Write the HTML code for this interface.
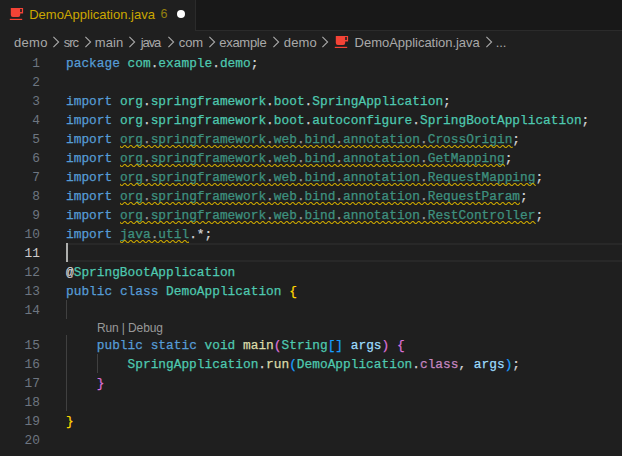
<!DOCTYPE html>
<html><head><meta charset="utf-8"><title>DemoApplication.java</title>
<style>
*{box-sizing:border-box;margin:0;padding:0}
html,body{width:622px;height:456px;overflow:hidden;background:#1f1f1f}
body{position:relative;font-family:"Liberation Sans",sans-serif;color:#ccc}
#tabs{position:absolute;left:0;top:0;width:622px;height:31px;background:#181818;border-bottom:1px solid #2b2b2b}
#tab{position:absolute;left:0;top:0;width:196px;height:31px;background:#1f1f1f;border-right:1px solid #2b2b2b}
#tab .lbl{position:absolute;left:29.2px;top:6px;font-size:13px;line-height:17px;color:#cca700;white-space:nowrap}
#tab .cnt{position:absolute;left:160.6px;top:6px;font-size:12.5px;line-height:17px;color:#94800f;white-space:nowrap}
#tab .dot{position:absolute;left:176.6px;top:9.7px;width:8.8px;height:8.8px;border-radius:50%;background:#fff}
.jicon{position:absolute}
#bc{position:absolute;left:0;top:31px;width:622px;height:22px;background:#1f1f1f;font-size:13px;line-height:22px;color:#a9a9a9;white-space:nowrap}
#bc span{position:absolute;top:1px}
.ch{position:absolute;top:5px}
#ed{position:absolute;left:0;top:54px;width:622px;height:402px;font-family:"Liberation Mono",monospace;font-size:13.7px;letter-spacing:0;line-height:19px;white-space:pre;color:#d4d4d4;-webkit-text-stroke:0.25px}
.ln{-webkit-text-stroke:0;position:absolute;left:0;width:40px;text-align:right;transform:scaleX(.93674);transform-origin:right center;color:#6e7681;height:19px}
.ln.a{color:#ccc}
.cl{position:absolute;left:66px;height:19px;transform:scaleX(.93674);transform-origin:left center}
.k{color:#569cd6}.t{color:#4ec9b0}.c{color:#c586c0}.f{color:#dcdcaa}.v{color:#9cdcfe}
.b1{color:#ffd700}.b2{color:#da70d6}.b3{color:#179fff}
.u{opacity:.667}
#hl{position:absolute;left:66px;top:189px;width:556px;height:19px;border-top:2px solid #282828;border-bottom:2px solid #282828}
#cur{position:absolute;left:66px;top:189px;width:2px;height:19px;background:#aeafad}
.sq{position:absolute}
.g{position:absolute;width:1px;background:#404040}
#lens{-webkit-text-stroke:0;position:absolute;left:97px;top:266px;font-family:"Liberation Sans",sans-serif;font-size:12px;letter-spacing:-0.12px;line-height:16px;color:#999}
</style></head><body>
<div id="tabs"><div id="tab">
<svg class="jicon" style="left:9px;top:7px" width="16" height="16" viewBox="0 0 16 16"><path d="M1.8 0.9H14.1V6.6H11.2V7.9Q11.2 9.9 9.2 9.9H3.8Q1.8 9.9 1.8 7.9Z M11.2 2H12.8V5H11.2Z" fill="#f44336" fill-rule="evenodd"/><rect x="0.8" y="11.8" width="12.4" height="1.2" fill="#f44336"/></svg>
<span class="lbl">DemoApplication.java</span><span class="cnt">6</span><span class="dot"></span>
</div></div>
<div id="bc">
<span style="left:13.9px;letter-spacing:0.33px">demo</span>
<span style="left:63.7px;letter-spacing:-1.00px">src</span>
<span style="left:94.8px;letter-spacing:0.07px">main</span>
<span style="left:140.8px;letter-spacing:-1.10px">java</span>
<span style="left:178.8px;letter-spacing:-0.15px">com</span>
<span style="left:219.3px;letter-spacing:-0.30px">example</span>
<span style="left:283.8px;letter-spacing:0.13px">demo</span>
<span style="left:354.6px;letter-spacing:-0.03px">DemoApplication.java</span>
<span style="left:495.8px;letter-spacing:-0.15px">...</span>
<svg class="ch" style="left:52.3px" width="8" height="12" viewBox="0 0 8 12"><path d="M1.4 0.8 L6.6 6 L1.4 11.2" fill="none" stroke="#a9a9a9" stroke-width="1.1"/></svg>
<svg class="ch" style="left:84.2px" width="8" height="12" viewBox="0 0 8 12"><path d="M1.4 0.8 L6.6 6 L1.4 11.2" fill="none" stroke="#a9a9a9" stroke-width="1.1"/></svg>
<svg class="ch" style="left:128.3px" width="8" height="12" viewBox="0 0 8 12"><path d="M1.4 0.8 L6.6 6 L1.4 11.2" fill="none" stroke="#a9a9a9" stroke-width="1.1"/></svg>
<svg class="ch" style="left:166.8px" width="8" height="12" viewBox="0 0 8 12"><path d="M1.4 0.8 L6.6 6 L1.4 11.2" fill="none" stroke="#a9a9a9" stroke-width="1.1"/></svg>
<svg class="ch" style="left:207.9px" width="8" height="12" viewBox="0 0 8 12"><path d="M1.4 0.8 L6.6 6 L1.4 11.2" fill="none" stroke="#a9a9a9" stroke-width="1.1"/></svg>
<svg class="ch" style="left:272.1px" width="8" height="12" viewBox="0 0 8 12"><path d="M1.4 0.8 L6.6 6 L1.4 11.2" fill="none" stroke="#a9a9a9" stroke-width="1.1"/></svg>
<svg class="ch" style="left:321.2px" width="8" height="12" viewBox="0 0 8 12"><path d="M1.4 0.8 L6.6 6 L1.4 11.2" fill="none" stroke="#a9a9a9" stroke-width="1.1"/></svg>
<svg class="ch" style="left:484.6px" width="8" height="12" viewBox="0 0 8 12"><path d="M1.4 0.8 L6.6 6 L1.4 11.2" fill="none" stroke="#a9a9a9" stroke-width="1.1"/></svg>
<svg class="jicon" style="left:334px;top:4px" width="16" height="16" viewBox="0 0 16 16"><path d="M1.8 0.9H14.1V6.6H11.2V7.9Q11.2 9.9 9.2 9.9H3.8Q1.8 9.9 1.8 7.9Z M11.2 2H12.8V5H11.2Z" fill="#f44336" fill-rule="evenodd"/><rect x="0.8" y="11.8" width="12.4" height="1.2" fill="#f44336"/></svg>
</div>
<svg width="0" height="0" style="position:absolute"><defs><pattern id="sqp" x="0" y="0" width="6" height="3" patternUnits="userSpaceOnUse"><g fill="#cca700"><polygon points="5.5,0 2.5,3 1.1,3 4.1,0"/><polygon points="4,0 6,2 6,0.6 5.4,0"/><polygon points="0,2 1,3 2.4,3 0,0.6"/></g></pattern></defs></svg>
<div id="ed">
<div id="hl"></div><div id="cur"></div>
<div class="ln" style="top:0px">1</div>
<div class="cl" style="top:0px"><span class="k">package</span> <span class="t">com</span>.<span class="t">example</span>.<span class="t">demo</span>;</div>
<div class="ln" style="top:19px">2</div>
<div class="ln" style="top:38px">3</div>
<div class="cl" style="top:38px"><span class="k">import</span> <span class="t">org</span>.<span class="t">springframework</span>.<span class="t">boot</span>.<span class="t">SpringApplication</span>;</div>
<div class="ln" style="top:57px">4</div>
<div class="cl" style="top:57px"><span class="k">import</span> <span class="t">org</span>.<span class="t">springframework</span>.<span class="t">boot</span>.<span class="t">autoconfigure</span>.<span class="t">SpringBootApplication</span>;</div>
<div class="ln" style="top:76px">5</div>
<div class="cl" style="top:76px"><span class="k">import</span> <span class="u"><span class="t">org</span>.<span class="t">springframework</span>.<span class="t">web</span>.<span class="t">bind</span>.<span class="t">annotation</span>.<span class="t">CrossOrigin</span></span>;</div>
<div class="ln" style="top:95px">6</div>
<div class="cl" style="top:95px"><span class="k">import</span> <span class="u"><span class="t">org</span>.<span class="t">springframework</span>.<span class="t">web</span>.<span class="t">bind</span>.<span class="t">annotation</span>.<span class="t">GetMapping</span></span>;</div>
<div class="ln" style="top:114px">7</div>
<div class="cl" style="top:114px"><span class="k">import</span> <span class="u"><span class="t">org</span>.<span class="t">springframework</span>.<span class="t">web</span>.<span class="t">bind</span>.<span class="t">annotation</span>.<span class="t">RequestMapping</span></span>;</div>
<div class="ln" style="top:133px">8</div>
<div class="cl" style="top:133px"><span class="k">import</span> <span class="u"><span class="t">org</span>.<span class="t">springframework</span>.<span class="t">web</span>.<span class="t">bind</span>.<span class="t">annotation</span>.<span class="t">RequestParam</span></span>;</div>
<div class="ln" style="top:152px">9</div>
<div class="cl" style="top:152px"><span class="k">import</span> <span class="u"><span class="t">org</span>.<span class="t">springframework</span>.<span class="t">web</span>.<span class="t">bind</span>.<span class="t">annotation</span>.<span class="t">RestController</span></span>;</div>
<div class="ln" style="top:171px">10</div>
<div class="cl" style="top:171px"><span class="k">import</span> <span class="u"><span class="t">java</span>.<span class="t">util</span></span>.*;</div>
<div class="ln a" style="top:190px">11</div>
<div class="ln" style="top:209px">12</div>
<div class="cl" style="top:209px">@<span class="t">SpringBootApplication</span></div>
<div class="ln" style="top:228px">13</div>
<div class="cl" style="top:228px"><span class="k">public</span> <span class="k">class</span> <span class="t">DemoApplication</span> <span class="b1">{</span></div>
<div class="ln" style="top:247px">14</div>
<div class="ln" style="top:282px">15</div>
<div class="cl" style="top:282px">    <span class="k">public</span> <span class="k">static</span> <span class="t">void</span> <span class="f">main</span><span class="b2">(</span><span class="t">String</span><span class="b3">[]</span> <span class="v">args</span><span class="b2">)</span> <span class="b2">{</span></div>
<div class="ln" style="top:301px">16</div>
<div class="cl" style="top:301px">        <span class="t">SpringApplication</span>.<span class="f">run</span><span class="b3">(</span><span class="t">DemoApplication</span>.<span class="c">class</span>, <span class="v">args</span><span class="b3">)</span>;</div>
<div class="ln" style="top:320px">17</div>
<div class="cl" style="top:320px">    <span class="b2">}</span></div>
<div class="ln" style="top:339px">18</div>
<div class="ln" style="top:358px">19</div>
<div class="cl" style="top:358px"><span class="b1">}</span></div>
<div class="ln" style="top:377px">20</div>
<div class="g" style="left:66px;top:246px;height:19px"></div>
<div class="g" style="left:66px;top:281px;height:76px"></div>
<div class="g" style="left:97px;top:300px;height:19px"></div>
<svg class="sq" style="left:119.9px;top:91px" width="392.7" height="3"><rect width="100%" height="3" fill="url(#sqp)"/></svg>
<svg class="sq" style="left:119.9px;top:110px" width="385.0" height="3"><rect width="100%" height="3" fill="url(#sqp)"/></svg>
<svg class="sq" style="left:119.9px;top:129px" width="415.8" height="3"><rect width="100%" height="3" fill="url(#sqp)"/></svg>
<svg class="sq" style="left:119.9px;top:148px" width="400.4" height="3"><rect width="100%" height="3" fill="url(#sqp)"/></svg>
<svg class="sq" style="left:119.9px;top:167px" width="415.8" height="3"><rect width="100%" height="3" fill="url(#sqp)"/></svg>
<svg class="sq" style="left:119.9px;top:186px" width="69.3" height="3"><rect width="100%" height="3" fill="url(#sqp)"/></svg>
<div id="lens">Run | Debug</div>
</div>
</body></html>
